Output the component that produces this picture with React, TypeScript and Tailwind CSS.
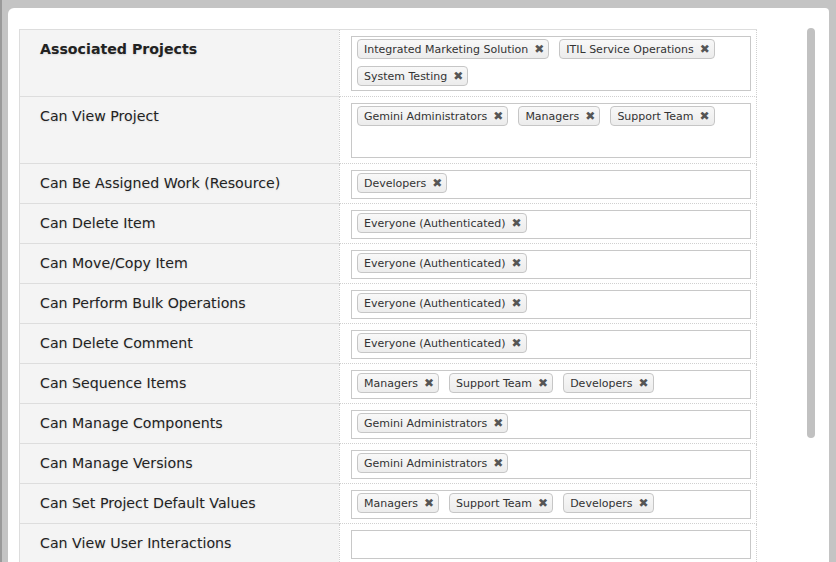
import React from "react";

const rows: { label: string; tags: string[]; tall?: boolean; bold?: boolean }[] = [
  { label: "Associated Projects", tags: ["Integrated Marketing Solution", "ITIL Service Operations", "System Testing"], tall: true, bold: true },
  { label: "Can View Project", tags: ["Gemini Administrators", "Managers", "Support Team"], tall: true },
  { label: "Can Be Assigned Work (Resource)", tags: ["Developers"] },
  { label: "Can Delete Item", tags: ["Everyone (Authenticated)"] },
  { label: "Can Move/Copy Item", tags: ["Everyone (Authenticated)"] },
  { label: "Can Perform Bulk Operations", tags: ["Everyone (Authenticated)"] },
  { label: "Can Delete Comment", tags: ["Everyone (Authenticated)"] },
  { label: "Can Sequence Items", tags: ["Managers", "Support Team", "Developers"] },
  { label: "Can Manage Components", tags: ["Gemini Administrators"] },
  { label: "Can Manage Versions", tags: ["Gemini Administrators"] },
  { label: "Can Set Project Default Values", tags: ["Managers", "Support Team", "Developers"] },
  { label: "Can View User Interactions", tags: [] },
];

function Tag({ text }: { text: string }) {
  return (
    <span className="inline-flex items-center h-[20px] pl-[6px] pr-[4px] rounded-[4px] border border-[#c6c6c6] bg-gradient-to-b from-[#f8f8f8] to-[#ececec] text-[11px] text-[#333] leading-none whitespace-nowrap">
      {text}
      <span className="ml-[6px] text-[12px] font-bold text-[#555] leading-none">✖</span>
    </span>
  );
}

export default function App() {
  return (
    <div className="w-[836px] h-[562px] overflow-hidden bg-[#c4c4c4] flex flex-col" style={{ fontFamily: '"DejaVu Sans", Verdana, sans-serif' }}>
      <div className="h-[8px] shrink-0 overflow-hidden border-l-[2px] border-[#9a9a9a]">
        <div className="h-[3px] overflow-hidden">
          <div className="-mt-[11px] pl-[40px] text-[13px] leading-[14px] text-[#666] whitespace-nowrap tracking-[1px]">
            content from the list of attachments. Please note there is no recommended version attachment will be changed accordingly anyway
          </div>
        </div>
      </div>
      <div className="flex-1 flex border-l-[2px] border-[#9a9a9a]">
        <div className="ml-[6px] mr-[7px] flex-1 bg-white rounded-tl-[6px] rounded-tr-[4px] flex">
          <div className="pl-[11px] pt-[21px] w-[749px] shrink-0">
            <div className="border-l border-t border-[#dddddd]">
              {rows.map((r, i) => (
                <div key={i} className="flex">
                  <div className={`w-[319px] shrink-0 bg-[#f4f4f4] border-b border-[#dddddd] pl-[20px] pt-[8px] text-[14.2px] leading-[22px] text-[#222] [text-shadow:0_1px_2px_rgba(0,0,0,0.12)] ${r.bold ? "font-bold" : ""} ${r.tall ? "h-[67px]" : "h-[40px]"}`}>
                    {r.label}
                  </div>
                  <div className={`w-[418px] shrink-0 border-l border-r border-b border-dotted border-[#d0d0d0] pl-[11px] pr-[5px] pt-[6px] ${r.tall ? "h-[67px]" : "h-[40px]"}`}>
                    <div className={`border border-[#c8c8c8] bg-white pl-[5px] pr-[4px] pt-[2px] pb-[3px] flex flex-wrap content-start gap-x-[10px] gap-y-[7px] ${r.tall ? "h-[55px]" : "h-[29px]"}`}>
                      {r.tags.map((t) => (
                        <Tag key={t} text={t} />
                      ))}
                    </div>
                  </div>
                </div>
              ))}
            </div>
          </div>
          <div className="ml-[50px] pt-[20px]">
            <div className="w-[8px] h-[410px] rounded-full bg-[#c1c1c1]" />
          </div>
        </div>
      </div>
    </div>
  );
}
